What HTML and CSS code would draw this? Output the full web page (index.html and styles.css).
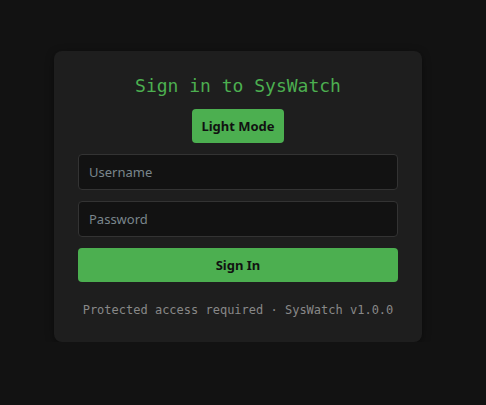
FILE: index.html
```html
<!DOCTYPE html>
<html lang="en">
<head>
    <meta charset="UTF-8">
    <meta name="viewport" content="width=device-width, initial-scale=1.0">
    <title>SysWatch - Sign In</title>
    <link rel="stylesheet" href="styles.css">
</head>
<body>
    <div class="login-card">
        <h2 class="login-title">Sign in to SysWatch</h2>
        <button class="theme-toggle" type="button">Light Mode</button>
        <form class="login-form">
            <input class="login-input" type="text" placeholder="Username">
            <input class="login-input" type="password" placeholder="Password">
            <button class="login-submit" type="submit">Sign In</button>
        </form>
        <p class="login-footer">Protected access required · SysWatch v1.0.0</p>
    </div>
</body>
</html>
```

FILE: styles.css
```css
body {
    margin: 0;
    padding: 51px 0 0 54px;
    background: #121212;
    font-family: 'Noto Sans', sans-serif;
    color: #ddd;
}

.login-card {
    width: 320px;
    padding: 24px;
    background: #1e1e1e;
    border-radius: 8px;
    box-shadow: 0 2px 8px rgba(0, 0, 0, 0.4);
    display: flex;
    flex-direction: column;
    align-items: center;
}

.login-title {
    margin: 0 0 12px;
    font-family: 'DejaVu Sans Mono', monospace;
    font-weight: normal;
    font-size: 18px;
    line-height: 22px;
    color: #4caf50;
}

.theme-toggle {
    width: 92px;
    height: 34px;
    padding: 0;
    border: none;
    border-radius: 4px;
    background: #4caf50;
    color: #111;
    font-family: inherit;
    font-weight: bold;
    font-size: 13px;
}

.login-form {
    width: 100%;
    margin-top: 11px;
    display: flex;
    flex-direction: column;
    gap: 11px;
}

.login-input {
    box-sizing: border-box;
    height: 36px;
    padding: 0 10px;
    border: 1px solid #333;
    border-radius: 4px;
    background: #121212;
    color: #ddd;
    font-family: inherit;
    font-size: 13px;
}

.login-input::placeholder {
    color: #7a868c;
}

.login-submit {
    height: 34px;
    border: none;
    border-radius: 4px;
    background: #4caf50;
    color: #111;
    font-family: inherit;
    font-weight: bold;
    font-size: 13px;
}

.login-footer {
    margin: 21px 0 0;
    font-family: 'DejaVu Sans Mono', monospace;
    font-size: 12px;
    line-height: 15px;
    color: #888;
}
```
